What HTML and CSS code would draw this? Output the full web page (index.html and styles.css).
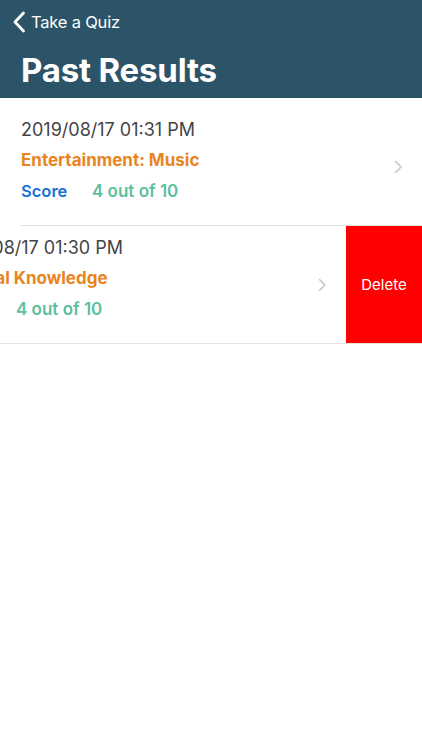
FILE: index.html
```html
<!DOCTYPE html>
<html>
<head>
<meta charset="utf-8">
<link rel="stylesheet" href="styles.css">
</head>
<body>
<header class="nav">
  <div class="back">
    <svg class="back-icon" width="14" height="22" viewBox="0 0 14 22"><path d="M11.5 2 L3 11 L11.5 20" fill="none" stroke="#fff" stroke-width="2.8" stroke-linecap="round" stroke-linejoin="round"/></svg>
    <span class="back-text">Take a Quiz</span>
  </div>
  <h1 class="title">Past Results</h1>
</header>
<main class="list">
  <div class="row">
    <div class="cell">
      <div class="info">
        <div class="date">2019/08/17 01:31 PM</div>
        <div class="cat">Entertainment: Music</div>
        <div class="score"><span class="score-label">Score</span><span class="score-val">4 out of 10</span></div>
      </div>
      <svg class="chev" width="9" height="14" viewBox="0 0 9 14"><path d="M1.5 1.5 L7 7 L1.5 12.5" fill="none" stroke="#c5c5ca" stroke-width="1.6" stroke-linecap="round" stroke-linejoin="round"/></svg>
    </div>
  </div>
  <div class="row swiped">
    <div class="cell">
      <div class="info">
        <div class="date">2019/08/17 01:30 PM</div>
        <div class="cat">General Knowledge</div>
        <div class="score"><span class="score-label">Score</span><span class="score-val">4 out of 10</span></div>
      </div>
      <svg class="chev" width="9" height="14" viewBox="0 0 9 14"><path d="M1.5 1.5 L7 7 L1.5 12.5" fill="none" stroke="#c5c5ca" stroke-width="1.6" stroke-linecap="round" stroke-linejoin="round"/></svg>
    </div>
    <div class="delete">Delete</div>
  </div>
</main>
</body>
</html>
```
FILE: styles.css
```css
html, body {
  margin: 0;
  padding: 0;
  background: #ffffff;
  font-family: "Inter", "Liberation Sans", sans-serif;
  -webkit-font-smoothing: antialiased;
}
.nav {
  background: #2c5469;
  height: 98px;
  box-sizing: border-box;
  padding-top: 10px;
}
.back {
  display: flex;
  align-items: center;
  height: 24px;
  padding-left: 12px;
  color: #fff;
}
.back-icon {
  display: block;
}
.back-text {
  font-size: 16.5px;
  margin-left: 5px;
  letter-spacing: -0.2px;
}
.title {
  margin: 16px 0 0 21px;
  color: #fff;
  font-size: 33px;
  font-weight: 700;
  line-height: 40px;
  letter-spacing: -0.2px;
}
.list {
  padding-top: 10px;
  overflow: hidden;
}
.row {
  display: flex;
  height: 118px;
  overflow: hidden;
}
.cell {
  flex: 0 0 422px;
  box-sizing: border-box;
  display: flex;
  align-items: flex-start;
  padding: 12px 21px 0 21px;
  position: relative;
}
.row:first-child .cell::after {
  content: "";
  position: absolute;
  left: 20px;
  right: 0;
  bottom: 0;
  height: 1px;
  background: #e3e3e6;
}
.swiped {
  border-bottom: 1px solid #e3e3e6;
  height: 117px;
}
.swiped .cell {
  margin-left: -76px;
  padding-top: 12px;
}
.info {
  flex: 1;
}
.date {
  font-size: 18px;
  color: #444448;
  line-height: 20px;
}
.cat {
  margin-top: 10px;
  font-size: 17px;
  font-weight: 700;
  color: #e9841f;
  line-height: 20px;
}
.score {
  margin-top: 11px;
  font-size: 17px;
  font-weight: 600;
  line-height: 20px;
  display: flex;
}
.score-label {
  color: #1674d6;
  width: 71px;
  font-size: 16.5px;
}
.score-val {
  color: #5cbf9c;
}
.chev {
  display: block;
  align-self: center;
  margin-top: -12px;
  margin-right: -2px;
}
.delete {
  flex: 0 0 76px;
  background: #fe0000;
  color: #fff;
  font-size: 15px;
  display: flex;
  align-items: center;
  justify-content: center;
}
```
